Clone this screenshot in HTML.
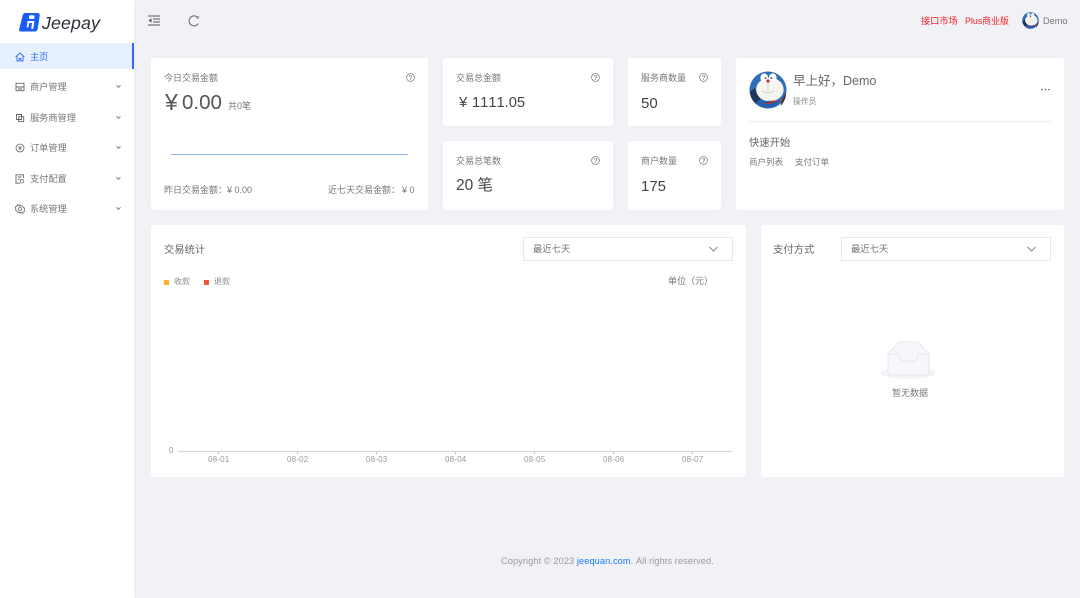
<!DOCTYPE html>
<html lang="zh"><head><meta charset="utf-8"><title>Jeepay</title>
<style>
*{box-sizing:border-box}
html,body{margin:0;padding:0;width:1080px;height:598px;overflow:hidden;background:#f0f2f5}
body{position:relative;font-family:"Liberation Sans","Noto Sans CJK SC",sans-serif;color:#666;font-kerning:none}
.a{position:absolute;white-space:nowrap;line-height:1}
.card{position:absolute;background:#fff;border-radius:3px}
.side{position:absolute;left:0;top:0;width:134px;height:598px;background:#fff;box-shadow:1px 0 2px rgba(0,0,0,.03)}
.t9{font-size:9px;color:#777}
.q{position:absolute;width:9px;height:9px}
.mi{position:absolute;left:30px;font-size:9.200px;color:#777;line-height:1;white-space:nowrap}
.ic{position:absolute;left:15px;width:10px;height:10px}
.ch{position:absolute;left:115px;width:7px;height:5px}
.sel{position:absolute;background:#fff;border:1px solid #e9e9e9;height:24px}
</style></head><body>
<svg width="0" height="0" style="position:absolute"><defs>
<symbol id="q" viewBox="0 0 18 18"><circle cx="9" cy="9" r="7.800" fill="none" stroke="#666" stroke-width="1.200"/><path d="M6.600 7.200a2.400 2.400 0 1 1 3.600 2c-.8.500-1.200 1-1.200 1.900" fill="none" stroke="#666" stroke-width="1.200"/><circle cx="9" cy="13.200" r=".9" fill="#666"/></symbol>
<symbol id="chev" viewBox="0 0 7 5"><path d="M1.500 1.300l2 2 2-2" fill="none" stroke="#777" stroke-width="1"/></symbol>
<symbol id="dora" viewBox="0 0 40 40">
<circle cx="20" cy="20" r="19.500" fill="#2f6db5"/>
<path d="M1 22a19 19 0 0 0 6 12l5-4-6-12z" fill="#22345a"/>
<path d="M35 30l4-7c0 6-3 11-6 14z" fill="#5a2a18"/>
<ellipse cx="22" cy="19.500" rx="14.500" ry="12.500" fill="#f7f5ef"/>
<ellipse cx="16" cy="7" rx="4" ry="4.500" fill="#fff"/>
<ellipse cx="25" cy="7" rx="4" ry="4.500" fill="#fff"/>
<circle cx="17.500" cy="7.500" r=".9" fill="#333"/><circle cx="23.500" cy="7.500" r=".9" fill="#333"/>
<circle cx="20" cy="10.500" r="1.700" fill="#c8322a"/>
<path d="M20 12.500v9M14 21q6 4 12 0" stroke="#aaa" stroke-width=".5" fill="none"/>
<path d="M7 34q10-4 25-2-5 7-12 7-7 0-13-5z" fill="#2460b0"/>
<path d="M10 33l8 1 8-3 6 0-12 4z" fill="#b8322a"/>
</symbol>
</defs></svg>

<div class="side">
<svg style="position:absolute;left:19px;top:13px" width="21" height="19" viewBox="0 0 21 19"><path d="M3.800 2Q4.200 0 6.500 0H18.500Q21 0 20.700 2.500L18.700 16Q18.300 18.500 15.500 18.500H2Q-.3 18.500.2 16Z" fill="#1a5cf6"/><rect x="10" y="2.200" width="5.500" height="3.800" rx="1.200" fill="#fff"/><path d="M8.500 8H15.500L14.200 16H12.200L13 10H10.200L9.400 14.500H7.700Z" fill="#fff"/></svg>
<div class="a" style="left:42px;top:15px;font-size:17.800px;font-style:italic;color:#2b2f38;letter-spacing:.1px">Jeepay</div>
<div style="position:absolute;left:0;top:43px;width:134px;height:26px;background:#e6f0ff;border-right:2px solid #2f6bf6"></div>

<svg class="ic" style="top:52px" viewBox="0 0 10 10"><path d="M.6 5L5 1l4.400 4M2 4v5h2.200V6.500h1.600V9H8V4" fill="none" stroke="#2f6bf6" stroke-width=".9"/></svg>
<div class="mi" style="top:53px;color:#2f6bf6">主页</div>

<svg class="ic" style="top:82px" viewBox="0 0 10 10"><path d="M1 1.300h8v7.400h-8zM1 5h8M3 7h4" fill="none" stroke="#666" stroke-width=".9"/></svg>
<div class="mi" style="top:83px">商户管理</div>
<svg class="ch" style="top:84px"><use href="#chev"/></svg>

<svg class="ic" style="top:113px" viewBox="0 0 10 10"><path d="M1.500 1.500h5v5h-5zM3.700 3.700h5v5h-5z" fill="none" stroke="#666" stroke-width=".9"/></svg>
<div class="mi" style="top:114px">服务商管理</div>
<svg class="ch" style="top:115px"><use href="#chev"/></svg>

<svg class="ic" style="top:143px" viewBox="0 0 10 10"><circle cx="5" cy="5" r="4" fill="none" stroke="#666" stroke-width=".8"/><path d="M3.500 3.200L5 5l1.500-1.800M5 5v2.300M3.600 5.500h2.800" fill="none" stroke="#666" stroke-width=".8"/></svg>
<div class="mi" style="top:144px">订单管理</div>
<svg class="ch" style="top:145px"><use href="#chev"/></svg>

<svg class="ic" style="top:174px" viewBox="0 0 10 10"><path d="M8.500 4V.8H1v8.400H5M3 3h3.500M3 5.300h2" fill="none" stroke="#666" stroke-width=".9"/><circle cx="7" cy="7.200" r="1.800" fill="none" stroke="#666" stroke-width=".8"/></svg>
<div class="mi" style="top:175px">支付配置</div>
<svg class="ch" style="top:176px"><use href="#chev"/></svg>

<svg class="ic" style="top:204px" viewBox="0 0 10 10"><path d="M5 .8l1 1.300 1.600-.2.600 1.500 1.400.8-.5 1.600.5 1.500-1.400.8-.6 1.500L6 8.100 5 9.300 4 8.100l-1.600.2-.6-1.500-1.400-.8.500-1.500-.5-1.600 1.400-.8.600-1.500L4 2.100z" fill="none" stroke="#666" stroke-width=".8"/><circle cx="5" cy="5" r="1.500" fill="none" stroke="#666" stroke-width=".8"/></svg>
<div class="mi" style="top:205px">系统管理</div>
<svg class="ch" style="top:206px"><use href="#chev"/></svg>
</div>

<svg style="position:absolute;left:148px;top:15px" width="12" height="11" viewBox="0 0 12 11"><path d="M0 1h12M5 4h7M5 7h7M0 10h12" stroke="#555" stroke-width="1"/><path d="M3.500 3.200v4.600L.5 5.500z" fill="#555"/></svg>
<svg style="position:absolute;left:188px;top:15px" width="12" height="12" viewBox="0 0 12 12"><path d="M10 2.800A5 5 0 1 0 10.300 8.600" fill="none" stroke="#666" stroke-width="1"/><path d="M10.300 1.200V3.200H8.400" fill="none" stroke="#666" stroke-width=".7"/></svg>

<div class="a" style="left:921px;top:17px;font-size:9.200px;color:#f5222d">接口市场</div>
<div class="a" style="left:965px;top:17px;font-size:8.900px;color:#f5222d">Plus商业版</div>
<svg style="position:absolute;left:1022px;top:12px" width="17" height="17"><use href="#dora"/></svg>
<div class="a" style="left:1043px;top:17px;font-size:9.200px;color:#777">Demo</div>

<!-- Today -->
<div class="card" style="left:151px;top:58px;width:277px;height:152px"></div>
<div class="a t9" style="left:164px;top:74px">今日交易金额</div>
<svg class="q" style="left:406px;top:73px"><use href="#q"/></svg>
<div class="a" style="left:165px;top:91px;font-size:23px;color:#555">¥</div>
<div class="a" style="left:182px;top:91px;font-size:20.500px;line-height:23px;color:#555">0.00</div>
<div class="a t9" style="left:228px;top:102px">共0笔</div>
<div style="position:absolute;left:171px;top:154px;width:237px;height:1px;background:#8fb2f5"></div>
<div class="a t9" style="left:164px;top:186px">昨日交易金额：¥ 0.00</div>
<div class="a t9" style="left:328px;top:186px">近七天交易金额：<span style="margin-left:2px">¥ 0</span></div>

<!-- Totals -->
<div class="card" style="left:443px;top:58px;width:170px;height:68px"></div>
<div class="a t9" style="left:456px;top:74px">交易总金额</div>
<svg class="q" style="left:591px;top:73px"><use href="#q"/></svg>
<div class="a" style="left:459px;top:95px;font-size:15px;color:#444">¥</div>
<div class="a" style="left:472px;top:96px;font-size:14.700px;color:#444">1111.05</div>

<div class="card" style="left:443px;top:141px;width:170px;height:69px"></div>
<div class="a t9" style="left:456px;top:157px">交易总笔数</div>
<svg class="q" style="left:591px;top:156px"><use href="#q"/></svg>
<div class="a" style="left:456px;top:178px;font-size:15.500px;color:#444">20 笔</div>

<div class="card" style="left:628px;top:58px;width:93px;height:68px"></div>
<div class="a t9" style="left:641px;top:74px">服务商数量</div>
<svg class="q" style="left:699px;top:73px"><use href="#q"/></svg>
<div class="a" style="left:641px;top:96px;font-size:15px;color:#444">50</div>

<div class="card" style="left:628px;top:141px;width:93px;height:69px"></div>
<div class="a t9" style="left:641px;top:157px">商户数量</div>
<svg class="q" style="left:699px;top:156px"><use href="#q"/></svg>
<div class="a" style="left:641px;top:179px;font-size:15px;color:#444">175</div>

<!-- Welcome -->
<div class="card" style="left:736px;top:58px;width:328px;height:152px"></div>
<svg style="position:absolute;left:749px;top:71px" width="38" height="38"><use href="#dora"/></svg>
<div class="a" style="left:793px;top:75px;font-size:12.500px;color:#666">早上好，Demo</div>
<div class="a" style="left:793px;top:98px;font-size:7.800px;color:#888">操作员</div>
<svg style="position:absolute;left:1040px;top:88px" width="11" height="3"><circle cx="2" cy="1.500" r=".8" fill="#555"/><circle cx="5.500" cy="1.500" r=".8" fill="#555"/><circle cx="9" cy="1.500" r=".8" fill="#555"/></svg>
<div style="position:absolute;left:749px;top:121px;width:302px;height:1px;background:#eee"></div>
<div class="a" style="left:749px;top:139px;font-size:10.300px;color:#666">快速开始</div>
<div class="a" style="left:749px;top:158px;font-size:8.500px;color:#777">商户列表</div>
<div class="a" style="left:795px;top:158px;font-size:8.500px;color:#777">支付订单</div>

<!-- Chart -->
<div class="card" style="left:151px;top:225px;width:595px;height:252px"></div>
<div class="a" style="left:164px;top:246px;font-size:10.300px;color:#666">交易统计</div>
<div class="sel" style="left:523px;top:237px;width:210px"></div>
<div class="a" style="left:533px;top:245px;font-size:9.300px;color:#777">最近七天</div>
<svg style="position:absolute;left:709px;top:246px" width="9" height="6" viewBox="0 0 9 6"><path d="M.5 1L4.500 5 8.500 1" fill="none" stroke="#888" stroke-width="1"/></svg>
<div style="position:absolute;left:164px;top:280px;width:5px;height:5px;background:#ffb02e"></div>
<div class="a" style="left:174px;top:278px;font-size:8px;color:#888">收款</div>
<div style="position:absolute;left:204px;top:280px;width:5px;height:5px;background:#f5563a"></div>
<div class="a" style="left:214px;top:278px;font-size:8px;color:#888">退款</div>
<div class="a t9" style="left:668px;top:277px">单位（元）</div>
<div class="a" style="left:169px;top:447px;font-size:8px;color:#999">0</div>
<svg style="position:absolute;left:178px;top:450px" width="555" height="5"><path d="M0 1.500H554" stroke="#d8d8d8" stroke-width="1.300"/><path d="M40.500 1.500v3M119.500 1.500v3M198.500 1.500v3M277.500 1.500v3M356.500 1.500v3M435.500 1.500v3M514.500 1.500v3" stroke="#ccc" stroke-width="1"/></svg>
<div class="a" style="left:208px;top:456px;font-size:8px;color:#999;letter-spacing:.2px">08-01</div>
<div class="a" style="left:287px;top:456px;font-size:8px;color:#999;letter-spacing:.2px">08-02</div>
<div class="a" style="left:366px;top:456px;font-size:8px;color:#999;letter-spacing:.2px">08-03</div>
<div class="a" style="left:445px;top:456px;font-size:8px;color:#999;letter-spacing:.2px">08-04</div>
<div class="a" style="left:524px;top:456px;font-size:8px;color:#999;letter-spacing:.2px">08-05</div>
<div class="a" style="left:603px;top:456px;font-size:8px;color:#999;letter-spacing:.2px">08-06</div>
<div class="a" style="left:682px;top:456px;font-size:8px;color:#999;letter-spacing:.2px">08-07</div>

<!-- Pay -->
<div class="card" style="left:761px;top:225px;width:303px;height:252px"></div>
<div class="a" style="left:773px;top:246px;font-size:10.300px;color:#666">支付方式</div>
<div class="sel" style="left:841px;top:237px;width:210px"></div>
<div class="a" style="left:851px;top:245px;font-size:9.300px;color:#777">最近七天</div>
<svg style="position:absolute;left:1027px;top:246px" width="9" height="6" viewBox="0 0 9 6"><path d="M.5 1L4.500 5 8.500 1" fill="none" stroke="#888" stroke-width="1"/></svg>
<svg style="position:absolute;left:880px;top:341px" width="58" height="40" viewBox="0 0 58 40"><ellipse cx="28" cy="32" rx="28" ry="6" fill="#f3f3f6"/><path d="M8 13L19 1H38L49 13V32Q49 34 47 34H10Q8 34 8 32Z" fill="#f7f7fb" stroke="#e6e6ef" stroke-width="1"/><path d="M8 13H18Q19 13 19.500 16T23 20H34Q37 20 37.500 16T39 13H49" fill="none" stroke="#e6e6ef" stroke-width="1"/></svg>
<div class="a" style="left:892px;top:389px;font-size:9px;color:#777">暂无数据</div>

<div class="a" style="left:501px;top:557px;font-size:9.200px;color:#999;letter-spacing:.1px">Copyright © 2023 <span style="color:#1a7af8">jeequan.com</span>. All rights reserved.</div>
</body></html>
